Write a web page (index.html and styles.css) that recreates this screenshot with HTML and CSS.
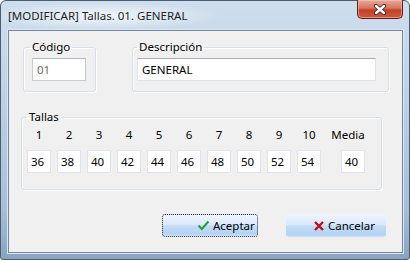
FILE: index.html
```html
<!DOCTYPE html>
<html>
	<head>
		<meta charset="utf-8">
		<title>Tallas</title>
		<link rel="stylesheet" href="styles.css">
	</head>
	<body>
	<div class="window">
		<div class="titlebar">
			<span class="title">[MODIFICAR] Tallas. 01. GENERAL</span>
			<div class="close">
				<svg width="14" height="11" viewBox="0 0 14 11">
					<path d="M3 2 L11 9 M11 2 L3 9" stroke="#3a2420" stroke-width="4.2" stroke-linecap="round"/>
					<path d="M3 2 L11 9 M11 2 L3 9" stroke="#fff" stroke-width="2.4" stroke-linecap="round"/>
				</svg>
			</div>
		</div>
		<div class="client">
			<div class="row">
				<fieldset class="grp codigo">
					<legend>Código</legend>
					<div class="txt off cod-txt">01</div>
				</fieldset>
				<fieldset class="grp desc">
					<legend>Descripción</legend>
					<div class="txt desc-txt">GENERAL</div>
				</fieldset>
			</div>
			<fieldset class="grp tallas">
				<legend>Tallas</legend>
				<div class="sizes">
					<span class="lbl">1</span>
					<span class="lbl">2</span>
					<span class="lbl">3</span>
					<span class="lbl">4</span>
					<span class="lbl">5</span>
					<span class="lbl">6</span>
					<span class="lbl">7</span>
					<span class="lbl">8</span>
					<span class="lbl">9</span>
					<span class="lbl">10</span>
					<span class="lbl media">Media</span>
					<div class="txt size">36</div>
					<div class="txt size">38</div>
					<div class="txt size">40</div>
					<div class="txt size">42</div>
					<div class="txt size">44</div>
					<div class="txt size">46</div>
					<div class="txt size">48</div>
					<div class="txt size">50</div>
					<div class="txt size">52</div>
					<div class="txt size">54</div>
					<div class="txt size media">40</div>
				</div>
			</fieldset>
			<div class="buttons">
				<div class="btn ok">
					<svg width="13" height="11" viewBox="0 0 13 11">
						<path d="M1.5 5.5 L4.8 9 L11.5 1.5" fill="none" stroke="#23a035" stroke-width="2"/>
					</svg>
					<span>Aceptar</span>
				</div>
				<div class="btn cancel">
					<svg width="12" height="12" viewBox="0 0 12 12">
						<path d="M2 2 L10 10 M10 2 L2 10" stroke="#b8101c" stroke-width="2.4"/>
					</svg>
					<span>Cancelar</span>
				</div>
			</div>
		</div>
	</div>
	</body>
</html>
```

FILE: styles.css
```css
body{
	margin:0;
	width:410px;
	height:260px;
	overflow:hidden;
	font-family:"Noto Sans","Open Sans",sans-serif;
	font-size:11.5px;
	color:#000;
}
.window{
	box-sizing:border-box;
	width:410px;
	height:260px;
	display:flex;
	flex-direction:column;
	border:1px solid #4b5d72;
	border-radius:6px 6px 3px 3px;
	background:linear-gradient(to bottom,#cfdeed 0%,#c2d4e7 30%,#a9bfd6 80%,#8aa4bf 100%);
}
.titlebar{
	height:29px;
	display:flex;
	position:relative;
	background:radial-gradient(ellipse 120px 14px at 100px 15px,rgba(255,255,255,.75),rgba(255,255,255,0));
	border-radius:5px 5px 0 0;
}
.title{
	margin:7px 0 0 7px;
	line-height:16px;
	color:#1e1e1e;
}
.close{
	position:absolute;
	right:6px;
	top:-1px;
	width:46px;
	height:19px;
	box-sizing:border-box;
	border:1px solid #5b2118;
	border-top:none;
	border-radius:0 0 5px 5px;
	background:linear-gradient(to bottom,#e9a898 0%,#d8745f 45%,#c2412a 55%,#cf5a3c 100%);
	box-shadow:inset 0 0 0 1px rgba(255,220,210,.45);
	display:flex;
	justify-content:center;
	align-items:center;
}
.client{
	flex:1;
	margin:0 6px 6px 7px;
	border:1px solid #6f8aa7;
	background:#f0f0f0;
	box-shadow:0 0 0 1px #dbe6f1;
}
.row{
	display:flex;
	margin:8px 0 0 14px;
}
.grp{
	margin:0;
	border:1px solid #d5dfe5;
	border-radius:3px;
	box-shadow:inset 1px 1px 0 #fff,1px 1px 0 #fff;
	min-width:0;
}
.grp legend{
	padding:0 2px;
	line-height:16px;
}
.codigo{
	width:73px;
	box-sizing:border-box;
	padding:3px 0 10px 8px;
}
.codigo legend{
	margin-left:-2px;
}
.desc{
	width:257px;
	box-sizing:border-box;
	margin-left:36px;
	padding:3px 0 10px 4px;
}
.txt{
	box-sizing:border-box;
	height:23px;
	line-height:21px;
	background:#fff;
	border:1px solid #e2e3ea;
	border-top-color:#abadb3;
	padding:0 0 0 4px;
	white-space:nowrap;
}
.cod-txt{
	width:54px;
}
.off{
	color:#6d6d6d;
	border-color:#c9cbd1;
	border-top-color:#b4b6bd;
}
.desc-txt{
	width:239px;
}
.tallas{
	width:361px;
	box-sizing:border-box;
	margin:17px 0 0 12px;
	padding:2px 0 16px 5px;
}
.sizes{
	display:grid;
	grid-template-columns:repeat(10,24px) 24px;
	column-gap:6px;
	row-gap:7px;
}
.lbl{
	line-height:16px;
	justify-self:center;
	white-space:nowrap;
}
.sizes .media{
	margin-left:14px;
}
.lbl.media{
	margin-right:-4px;
}
.size{
	width:24px;
	padding-left:3px;
	border-color:#e2e3ea;
}
.buttons{
	display:flex;
	justify-content:flex-end;
	gap:28px;
	margin-top:24px;
	padding-right:16px;
}
.btn{
	box-sizing:border-box;
	height:23px;
	line-height:16px;
	border-radius:3px;
	background:linear-gradient(to bottom,#eef5fd 0%,#dde9fa 45%,#c3dcf8 52%,#b3d3f5 90%,#cfe3f8 100%);
	display:flex;
	align-items:center;
	gap:3px;
}
.ok{
	width:96px;
	border:1px dotted #2a2a2a;
	padding-left:34px;
}
.cancel{
	width:100px;
	padding-left:27px;
}
```
